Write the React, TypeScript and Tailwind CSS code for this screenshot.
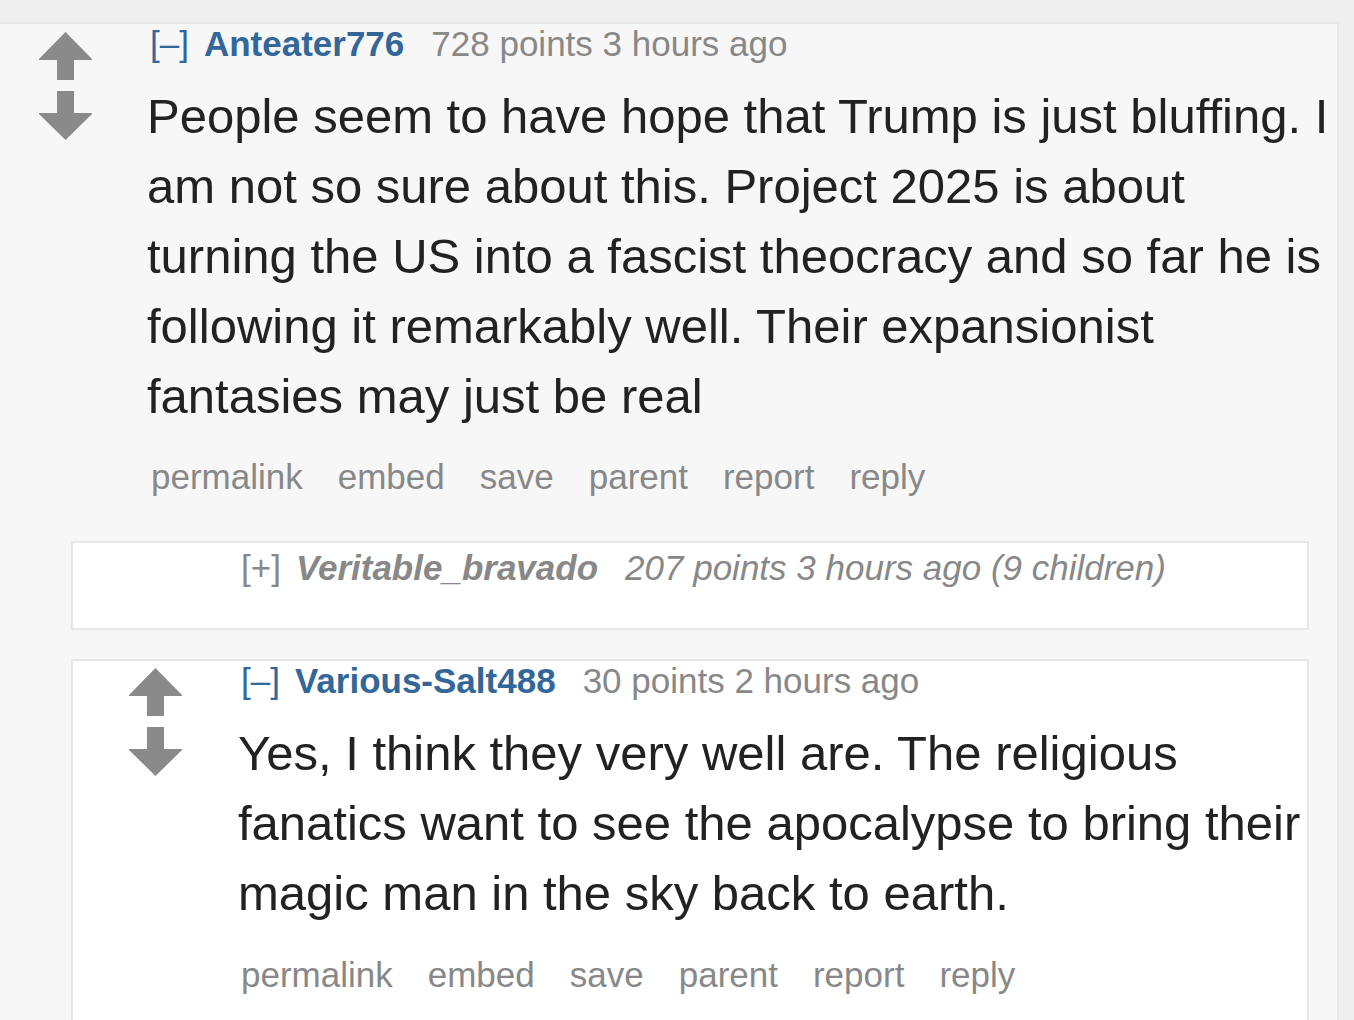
import React from "react";

interface TaglineProps {
  author: string;
  points: string;
  collapsed?: boolean;
  className?: string;
}

const Votes = ({ className = "" }: { className?: string }) => (
  <div className={`flex w-[53px] shrink-0 flex-col gap-[11px] ${className}`}>
    <svg width="53" height="48" viewBox="0 0 53 48" fill="#8a8a8a">
      <polygon points="26.5,0 53,27 53,28 0,28 0,27" />
      <rect x="18" y="28" width="17" height="20" />
    </svg>
    <svg width="53" height="49" viewBox="0 0 53 49" fill="#8a8a8a">
      <rect x="18" y="0" width="17" height="22" />
      <polygon points="0,22 53,22 53,23 26.5,49 0,23" />
    </svg>
  </div>
);

const Tagline = ({ author, points, collapsed, className = "" }: TaglineProps) => (
  <div className={`flex text-[35px] leading-[40px] whitespace-nowrap ${className}`}>
    {collapsed ? (
      <>
        <span className="text-[#888]">[+]</span>
        <span className="ml-[15px] font-bold italic text-[#888]">{author}</span>
        <span className="ml-[27px] italic text-[#888]">{points}</span>
      </>
    ) : (
      <>
        <span className="text-[#369]">[–]</span>
        <span className="ml-[15px] font-bold text-[#369]">{author}</span>
        <span className="ml-[27px] text-[#888]">{points}</span>
      </>
    )}
  </div>
);

const Buttons = ({ className = "" }: { className?: string }) => (
  <ul className={`flex gap-[35px] text-[35px] leading-[40px] text-[#888] ${className}`}>
    {["permalink", "embed", "save", "parent", "report", "reply"].map((b) => (
      <li key={b}>{b}</li>
    ))}
  </ul>
);

export default function App() {
  return (
    <div className="h-[1020px] overflow-hidden bg-[#efefef] pt-[22px] font-['Liberation_Sans',Arial,sans-serif]">
      <div className="ml-[-2px] w-[1341px] border-2 border-[#e6e6e6] bg-[#f7f7f7] pb-[40px]">
        <div className="flex">
          <Votes className="ml-[39px] mt-[8px]" />
          <div className="ml-[55px] flex-1">
            <Tagline className="ml-[3px]" author="Anteater776" points="728 points 3 hours ago" />
            <p className="mt-[17px] text-[49px] leading-[70px] text-[#222]">
              People seem to have hope that Trump is just bluffing. I am not so sure about this.
              Project 2025 is about turning the US into a fascist theocracy and so far he is
              following it remarkably well. Their expansionist fantasies may just be real
            </p>
            <Buttons className="ml-[4px] mt-[26px]" />
          </div>
        </div>

        <div className="ml-[71px] mt-[44px] h-[89px] w-[1238px] border-2 border-[#e6e6e6] bg-white pl-[168px] pt-[5px]">
          <Tagline
            collapsed
            author="Veritable_bravado"
            points="207 points 3 hours ago (9 children)"
          />
        </div>

        <div className="ml-[71px] mt-[29px] flex w-[1238px] border-2 border-[#e6e6e6] bg-white pb-[40px]">
          <Votes className="ml-[56px] mt-[7px]" />
          <div className="ml-[56px] flex-1">
            <Tagline className="ml-[3px]" author="Various-Salt488" points="30 points 2 hours ago" />
            <p className="mt-[17px] text-[49px] leading-[70px] text-[#222]">
              Yes, I think they very well are. The religious fanatics want to see the apocalypse
              to bring their magic man in the sky back to earth.
            </p>
            <Buttons className="ml-[3px] mt-[27px]" />
          </div>
        </div>
      </div>
    </div>
  );
}
